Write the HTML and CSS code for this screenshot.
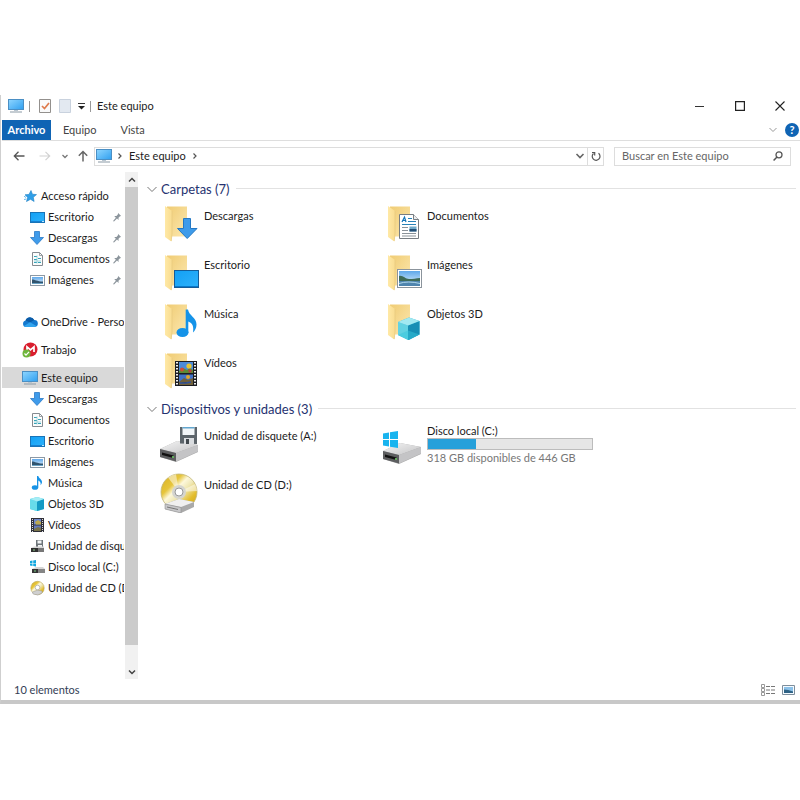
FILE: styles.css
```css
* { box-sizing: border-box; }

body {
  margin: 0;
  padding: 95px 0 0;
  background: #fff;
  color: #1c1c1c;
  font: 11px/14px Lato, "Open Sans", sans-serif;
}

a { color: inherit; text-decoration: none; }
svg { display: block; flex: none; }
button {
  display: flex;
  align-items: center;
  justify-content: center;
  margin: 0;
  padding: 0;
  border: 0;
  background: none;
  color: inherit;
  font: inherit;
}
button svg { width: 10px; height: 10px; }

.defs { position: absolute; width: 0; height: 0; }
.ico { width: 16px; height: 16px; }

.window {
  padding-left: 1px;
  border-left: 1px solid #cfcfcf;
  border-bottom: 4px solid #c8c8c8;
}

/* Title bar */
.titlebar { display: flex; align-items: center; height: 22px; padding-left: 6px; }
.titlebar h1 { margin: 0 0 0 6px; font-size: 11px; font-weight: 400; }
.rule { width: 1px; height: 11px; margin-left: 5px; background: #999; }
.titlebar .quick { margin: 0 4px 0 7px; }
.titlebar .quick ~ .rule { margin-left: 1px; }
.controls { display: flex; margin-left: auto; }
.controls button { width: 40px; height: 22px; }

/* Ribbon tabs */
.tabs { display: flex; align-items: center; height: 24px; padding-top: 3px; border-bottom: 1px solid #dedede; }
.tab { height: 20px; padding: 0 12px; color: #444; }
.tab.active { width: 49px; padding: 0; background: #0f64b4; color: #fff; font-weight: 700; }
.expand { width: 16px; height: 20px; margin-left: auto; }
.help {
  width: 14px;
  height: 14px;
  margin: 0 1px 0 4px;
  border-radius: 50%;
  background: #0f64b4;
  color: #fff;
  font-weight: 700;
}

/* Address row */
.navbar { display: flex; align-items: center; height: 30px; padding: 0 9px 0 11px; }
.arrow, .up { width: 12px; height: 20px; }
.arrow svg, .up svg { width: 12px; height: 12px; }
.arrow + .arrow { margin-left: 14px; }
.recent { width: 10px; height: 20px; margin: 0 7px 0 9px; }
.address {
  display: flex;
  flex: 1;
  align-items: center;
  height: 19px;
  margin: 0 10px 0 5px;
  padding-left: 1px;
  border: 1px solid #ddd;
}
.address .chev { width: 10px; height: 10px; margin: 0 3px; }
.address a { margin: 0 1px; }
.drop { width: 14px; margin-left: auto; }
.reload { width: 16px; height: 17px; border-left: 1px solid #ddd; }
.search {
  display: flex;
  align-items: center;
  width: 177px;
  height: 19px;
  padding: 0 7px;
  border: 1px solid #ddd;
}
.search input {
  flex: 1;
  min-width: 0;
  padding: 0;
  border: 0;
  outline: 0;
  background: none;
  font: inherit;
}
.search input::placeholder { color: #666; opacity: 1; }
.search svg { width: 10px; height: 10px; }

/* Folder tree, scroll bar and content */
.body { display: flex; min-height: 508px; padding-top: 1px; }
.tree { width: 122px; margin-right: 1px; padding-top: 13px; overflow: hidden; }
.group { margin-bottom: 7px; }
.group:first-child { margin-bottom: 21px; }
.tree a { display: flex; align-items: center; height: 21px; padding-left: 20px; white-space: nowrap; }
.tree a.sub { padding-left: 27px; }
.tree .ico { margin-right: 3px; }
.tree .current { background: #d9d9d9; }
.tree .pin { width: 12px; height: 12px; margin: 0 1px 0 auto; }

.scroll { display: flex; flex-direction: column; width: 13px; background: #f1f1f1; }
.scroll button { width: 13px; height: 15px; }
.thumb { flex: 458; background: #cbcbcb; }
.track { flex: 19; }

main { flex: 1; min-width: 0; padding: 8px 4px 0 9px; }
h2 {
  display: flex;
  align-items: center;
  gap: 4px;
  height: 17px;
  margin: 0;
  color: #253270;
  font-size: 13px;
  font-weight: 400;
}
h2 svg { width: 10px; height: 10px; }
h2::after { content: ""; flex: 1; height: 1px; margin-left: 2px; background: #e2e2e2; }
.items {
  display: grid;
  grid-template-columns: repeat(auto-fill, 223px);
  grid-auto-rows: 49px;
  padding: 7px 0 0 13px;
}
.items a { display: flex; align-items: flex-start; gap: 4px; }
.items svg { width: 40px; height: 40px; }
.items a > span { padding-top: 5px; }
.items .disk .info { display: flex; flex-direction: column; padding: 0; line-height: 13px; }
.bar { width: 166px; height: 12px; margin: 1px 0; border: 1px solid #bcbcbc; background: #e6e6e6; }
.fill { display: block; height: 100%; background: #26a0da; }
.free { color: #777; }

/* Status bar */
.status { display: flex; align-items: center; height: 21px; padding: 0 4px 0 12px; color: #333d55; }
.status span { margin-right: auto; }
.status button { margin-left: 4px; }
.status button svg { width: 16px; height: 12px; }
```

FILE: index.html
```html
<!DOCTYPE html>
<html lang="es">
<head>
<meta charset="utf-8">
<title>Este equipo</title>
<link rel="stylesheet" href="styles.css">
</head>
<body>
<svg class="defs" aria-hidden="true">
  <defs>
    <linearGradient id="g-screen" x1="0" y1="0" x2="1" y2="1"><stop offset="0" stop-color="#8fd6ff"/><stop offset="1" stop-color="#2f9ff0"/></linearGradient>
    <linearGradient id="g-desk" x1="0" y1="0" x2="1" y2="1"><stop offset="0" stop-color="#12a0f5"/><stop offset="1" stop-color="#2fb2fb"/></linearGradient>
    <linearGradient id="g-front" x1="0" y1="0" x2="1" y2="0"><stop offset="0" stop-color="#ffe9a6"/><stop offset="1" stop-color="#f9dc90"/></linearGradient>
    <linearGradient id="g-back" x1="0" y1="0" x2="1" y2="1"><stop offset="0" stop-color="#f0cc74"/><stop offset="1" stop-color="#fce8b0"/></linearGradient>
    <linearGradient id="g-drive" x1="0" y1="0" x2="1" y2="1"><stop offset="0" stop-color="#f4f4f4"/><stop offset="1" stop-color="#c4c4c6"/></linearGradient>
    <linearGradient id="g-disc" x1="0" y1="0" x2="1" y2="1"><stop offset="0" stop-color="#d9b021"/><stop offset=".3" stop-color="#e6c53c"/><stop offset=".42" stop-color="#fdf8dc"/><stop offset=".55" stop-color="#efe7b4"/><stop offset=".75" stop-color="#e3bd2c"/><stop offset="1" stop-color="#c79d1a"/></linearGradient>
    <linearGradient id="g-sky" x1="0" y1="0" x2="0" y2="1"><stop offset="0" stop-color="#5fa8ea"/><stop offset="1" stop-color="#e6f4ff"/></linearGradient>
  </defs>
  <symbol id="pc" viewBox="0 0 16 16"><rect x=".5" y="1.5" width="15" height="10" fill="url(#g-screen)" stroke="#4b8fc4"/><path d="M6 12h4v1H6z" fill="#b9c6d0"/><path d="M2 14h12" stroke="#8a99a5"/></symbol>
  <symbol id="desktop" viewBox="0 0 16 16"><rect x="1.5" y="3.5" width="14" height="10" fill="url(#g-desk)" stroke="#1874b8"/><path d="M2 12.5h11" stroke="#1680d0"/><path d="M13 12.5h2" stroke="#b8e6ff"/></symbol>
  <symbol id="down" viewBox="0 0 16 16"><path d="M5.500 1.500h5v6h4L8 14.500 1.500 7.500h4z" fill="#3f9bea" stroke="#2b7ac6" stroke-width=".8"/></symbol>
  <symbol id="doc" viewBox="0 0 16 16"><path d="M3.500 1.500h7l3 3v10h-10z" fill="#fcfcfc" stroke="#858b90"/><path d="M10.500 1.500v3h3" fill="none" stroke="#858b90" stroke-width=".8"/><path d="M5 5.500h3M5 8.500h3M9 7.500h3M5 11.500h3M9 11.500h3" stroke="#36a4b8"/><path d="M8 4.500v8M5 10h7" stroke="#8ecbd6" stroke-width=".8"/></symbol>
  <symbol id="image" viewBox="0 0 16 16"><rect x="1.500" y="3.500" width="14" height="10" fill="#fff" stroke="#8c99a5"/><path d="M3 5h11v7H3z" fill="url(#g-sky)"/><path d="M3 7.500c3 0 5 2 11 2V12H3z" fill="#31546e"/><path d="M3 11h11v1H3z" fill="#69a2c4"/></symbol>
  <symbol id="music" viewBox="0 0 16 16"><ellipse cx="6" cy="12.500" rx="3.200" ry="2.300" fill="#1793e6"/><path d="M8 1h1.300c.4 2.300 3.700 3.300 3.700 6 0 1.400-.7 2.400-1.500 3.200.7-2.500-.5-3.900-2.200-4.600v7H8z" fill="#1793e6"/></symbol>
  <symbol id="cube" viewBox="0 0 16 16"><path d="M8 1l7 2v10l-7 2-7-2V3z" fill="#4bc9e3"/><path d="M1 3l7 2.500V15l-7-2z" fill="#68dcea"/><path d="M8 5.500L15 3v10l-7 2z" fill="#159bc4"/><path d="M1 3l7-2 7 2-7 2.500z" fill="#a5edf5"/></symbol>
  <symbol id="film" viewBox="0 0 16 16"><path d="M2 1h13v14H2z" fill="#303038"/><path d="M5 2h7v5.500H5z" fill="#6e86c8"/><path d="M5 8.500h7V14H5z" fill="#6478b8"/><path d="M6 5l3-2 3 2v2.500H7z" fill="#bca84e"/><path d="M5 12l4-2 3 1v3H5z" fill="#77724a"/><path d="M3.500 2v13M13.500 2v13" stroke="#ddd" stroke-dasharray="1 1"/></symbol>
  <symbol id="star" viewBox="0 0 16 16"><path d="M9 2.500l1.400 3.700 4.100.4-3.200 2.700.8 4.200-3.600-2.200L4.500 13.500l1.200-4.100L3 6.800l4-.4z" fill="#2f9fe8" stroke="#1d7fc4" stroke-width=".6"/><path d="M2 8.200l2 1.300M2 11.500l2.300-.5" stroke="#68b9ec"/></symbol>
  <symbol id="pin" viewBox="0 0 16 16"><path d="M9.500 2.500l4 4-1.500.6-2 2 .1 3L8 10 4 14l-1-.2L3 13l3.500-4L4.300 6.800l3-.1 1.800-2z" fill="#8c959c"/></symbol>
  <symbol id="cloud" viewBox="0 0 16 16"><path d="M4 13a3.300 3.300 0 0 1-.4-6.500A4.700 4.700 0 0 1 12.200 6 3.500 3.500 0 0 1 12.500 13z" fill="#1479cf"/><path d="M3.500 6.500A4.700 4.700 0 0 1 12.200 6L8 8.500z" fill="#0b5ca8"/><path d="M2 12l6-3.700 6.500 3.700q-.8 1-2 1H4q-1.300 0-2-1z" fill="#31a4ee"/></symbol>
  <symbol id="mega" viewBox="0 0 16 16"><circle cx="8.500" cy="7.500" r="7" fill="#d91e2e"/><path d="M5 10V4.800l3.500 3 3.500-3V10" fill="none" stroke="#fff" stroke-width="1.700"/><circle cx="4.500" cy="11.500" r="4" fill="#6fb63c"/><path d="M2.500 11.500l1.500 1.700 3-3.400" fill="none" stroke="#fff" stroke-width="1.200"/></symbol>
  <symbol id="floppy-s" viewBox="0 0 16 16"><path d="M7 2h7v7H7z" fill="#6d7478"/><path d="M8.500 2.500h4v3h-4zM9 7h4v2H9z" fill="#f3f5f6"/><path d="M2 10l3-1.500h10V10z" fill="#d6d6d6"/><path d="M2 10h13v4H2z" fill="#777"/><path d="M2 10h7v4H2z" fill="#303030"/><path d="M4 12h2" stroke="#8fd08a"/></symbol>
  <symbol id="disk-s" viewBox="0 0 16 16"><path d="M1 2l2.500-.4v2.300H1zM4.200 1.500L7 1v2.900H4.200zM1 4.600h2.500v2.300L1 6.500zM4.200 4.600H7v2.900L4.200 7z" fill="#12a7df"/><path d="M3 10l4-2h7l2 2z" fill="#d6d6d6"/><path d="M3 10h13v4H3z" fill="#858585"/><path d="M3 10h6v4H3z" fill="#353535"/><path d="M5 12h2" stroke="#7fd089"/></symbol>
  <symbol id="cd-s" viewBox="0 0 16 16"><circle cx="8.500" cy="8" r="6.700" fill="url(#g-disc)" stroke="#b8a65a" stroke-width=".6"/><circle cx="8.500" cy="7.500" r="2.300" fill="#fff" stroke="#bbb"/><path d="M3.500 12l5-1.800 4.500.8v2l-4 2-5-1z" fill="#cfcfcf" stroke="#999" stroke-width=".5"/></symbol>
  <symbol id="folder" viewBox="0 0 40 40"><path d="M7 2.500h20v30H7z" fill="url(#g-back)"/><path d="M5 2l7 5v23l-.7 7.500L5 33z" fill="url(#g-front)"/><path d="M12 7v23l-.8 7" fill="none" stroke="#e9cb80" stroke-width=".8"/></symbol>
  <symbol id="f-down" viewBox="0 0 40 40"><use href="#folder"/><path d="M23.500 14.500h7v10h6.500L27.200 34.500 17.500 24.500h6z" fill="#3e9bea" stroke="#2478c4"/></symbol>
  <symbol id="f-desk" viewBox="0 0 40 40"><use href="#folder"/><rect x="14.500" y="17.500" width="24" height="17" fill="url(#g-desk)" stroke="#155c98"/><path d="M15 33.500h23" stroke="#0878c9"/></symbol>
  <symbol id="f-music" viewBox="0 0 40 40"><use href="#folder"/><ellipse cx="22.500" cy="30.500" rx="6" ry="4.500" fill="#1593e8"/><path d="M25.700 7.500H28c.8 6 8.500 8 8.500 15 0 3.500-1.500 6-3.500 8 1-6-.5-9.500-4.700-11V31h-2.600z" fill="#1593e8"/></symbol>
  <symbol id="f-film" viewBox="0 0 40 40"><use href="#folder"/><path d="M15 10h22v25H15z" fill="#1c1d22"/><path d="M19 11h14v11H19z" fill="#4d8bd8"/><path d="M19 23.500h14V34H19z" fill="#4173c8"/><path d="M19 20l4-3 4 2 3-2 3 2v3H19z" fill="#5d8b35"/><circle cx="29" cy="15" r="2.600" fill="#e8c530"/><circle cx="22" cy="18.500" r="2" fill="#d14b36"/><circle cx="30" cy="20" r="1.700" fill="#b8413e"/><path d="M19 31l5-4 4 2 5-2v7H19z" fill="#71613c"/><circle cx="28" cy="26" r="2" fill="#e2a62a"/><path d="M20 32h6l5-1" stroke="#31539a" stroke-width="1.500"/><path d="M17 11v24M35 11v24" stroke="#f1f1f1" stroke-width="2" stroke-dasharray="1.500 1.500"/></symbol>
  <symbol id="f-doc" viewBox="0 0 40 40"><use href="#folder"/><path d="M16.500 10.500h14l5 5v19h-19z" fill="#fff" stroke="#777d82"/><path d="M30.500 10.500v5h5" fill="#eee" stroke="#777d82"/><path d="M19 18l2.500-5 1.500 5M20 16.500h3" fill="none" stroke="#1475b8" stroke-width="1.200"/><path d="M25 14.500h4M25 17.500h8M19 20.500h14" stroke="#2883b8"/><path d="M19 23.500h6M19 26.500h6M19 29.500h14M19 32h14" stroke="#8b9399"/><path d="M26.500 22.500h7v5h-7z" fill="#6fa9c9"/><path d="M26.500 25h7v2.500h-7z" fill="#234e75"/></symbol>
  <symbol id="f-image" viewBox="0 0 40 40"><use href="#folder"/><rect x="14.500" y="16.500" width="24" height="18" fill="#fff" stroke="#8b949c"/><path d="M16 18h21v15H16z" fill="url(#g-sky)"/><path d="M16 23c4-1 6 3 10 3s7-.5 11-1v3.500H16z" fill="#3f6b58"/><path d="M16 28h21v5H16z" fill="#4f85ae"/><path d="M16 30.500q9-3 21 0" fill="none" stroke="#b0d7ec"/></symbol>
  <symbol id="f-cube" viewBox="0 0 40 40"><use href="#folder"/><path d="M15 20l11-4.500L36.500 19v13.500L26 38l-11-5z" fill="#36b8d6"/><path d="M15 20l10 3.500V38l-10-5z" fill="#62d2e2"/><path d="M25 23.500L36.500 19v13.500L25 38z" fill="#188fb5"/><path d="M15 20l11-4.500L36.500 19 25 23.500z" fill="#a2e9f1"/><path d="M15 33l10-4.500 11.500 4L25 38z" fill="#36c6dc" opacity=".5"/></symbol>
  <symbol id="d-base" viewBox="0 0 40 40"><path d="M0 25l17-8 21 4v7L16 38 0 33z" fill="#aaa"/><path d="M0 25l17-8 21 4-22 8z" fill="url(#g-drive)"/><path d="M16 29l22-8v6.500L16 37.500z" fill="#c4c4c6"/><path d="M0 25l16 4v8.500L0 33z" fill="#5d5e60"/><path d="M2 28.500l11.500 3V34L2 31z" fill="#111"/><path d="M12 33h2" stroke="#75d96d" stroke-width="1.500"/></symbol>
  <symbol id="d-floppy" viewBox="0 0 40 40"><use href="#d-base"/><path d="M20 3h17v17l-17-.5z" fill="#5d656b"/><path d="M22.500 3h12v8h-12z" fill="#f2f6f8"/><path d="M22.500 3h12v1.500h-12z" fill="#62a6cf"/><path d="M24 14h10v6H24z" fill="#dadde0"/><path d="M26 15h3v5h-3z" fill="#42494e"/></symbol>
  <symbol id="d-win" viewBox="0 0 40 40"><g transform="translate(0 2)"><use href="#d-base"/></g><path d="M0 9.500l6-1V15H0zM7 8.300L15 7v8H7zM0 16h6v6.500l-6-1zM7 16h8v8l-8-1.300z" fill="#18b4ef"/></symbol>
  <symbol id="d-cd" viewBox="0 0 40 40"><circle cx="19" cy="19" r="18" fill="url(#g-disc)" stroke="#c2b677" stroke-width=".8"/><path d="M19 19L8 4.500a18 18 0 0 1 8-3.200zM19 19l16-8a18 18 0 0 1 2 7z" fill="#fff" opacity=".5"/><circle cx="19" cy="19" r="7" fill="#d5d5d0"/><circle cx="19" cy="19" r="4" fill="#fff" stroke="#999"/><path d="M5 31l14-5 15 3v5l-13 6-16-4z" fill="#aaa"/><path d="M5 31l14-5 15 3-13 5z" fill="#f0f0f0"/><path d="M5 31l16 3.500V40L5 36z" fill="#c7c7c9" stroke="#909090" stroke-width=".6"/><path d="M7 34l11 2.500" stroke="#777"/></symbol>
</svg>

<div class="window">
  <header class="titlebar">
    <svg class="ico"><use href="#pc"/></svg>
    <span class="rule"></span>
    <svg class="ico quick" viewBox="0 0 16 16"><path d="M2.500 1.500h11v13h-11z" fill="#fafafa" stroke="#93908d"/><path d="M5 8l2.500 2.500L12 5" fill="none" stroke="#df7b4c" stroke-width="1.700"/></svg>
    <svg class="ico" viewBox="0 0 16 16"><path d="M2.500 1.500h11v13h-11z" fill="#e3e9f1" stroke="#c9d2de"/></svg>
    <svg class="ico" viewBox="0 0 16 16"><path d="M5 5.500h7" stroke="#333"/><path d="M5 8h7l-3.500 3.500z" fill="#222"/></svg>
    <span class="rule"></span>
    <h1>Este equipo</h1>
    <div class="controls">
      <button aria-label="Minimizar"><svg viewBox="0 0 10 10"><path d="M0 5.500h9" stroke="#333"/></svg></button>
      <button aria-label="Maximizar"><svg viewBox="0 0 10 10"><path d="M.6.600h8.800v8.800H.6z" fill="none" stroke="#222" stroke-width="1.200"/></svg></button>
      <button aria-label="Cerrar"><svg viewBox="0 0 10 10"><path d="M.5.500l9 9M9.500.500l-9 9" stroke="#222" stroke-width="1.100"/></svg></button>
    </div>
  </header>

  <nav class="tabs">
    <button class="tab active">Archivo</button>
    <button class="tab">Equipo</button>
    <button class="tab">Vista</button>
    <button class="expand" aria-label="Expandir"><svg viewBox="0 0 10 10"><path d="M1.500 3L5 6.500 8.500 3" fill="none" stroke="#999"/></svg></button>
    <button class="help" aria-label="Ayuda">?</button>
  </nav>

  <div class="navbar">
    <button class="arrow" aria-label="Atrás"><svg viewBox="0 0 12 12"><path d="M11.500 6H1.500M5.500 1.800L1.300 6l4.200 4.200" fill="none" stroke="#555" stroke-width="1.300"/></svg></button>
    <button class="arrow" aria-label="Adelante"><svg viewBox="0 0 12 12"><path d="M.5 6h10M6.500 1.800L10.700 6l-4.200 4.200" fill="none" stroke="#d2d2d2" stroke-width="1.200"/></svg></button>
    <button class="recent" aria-label="Recientes"><svg viewBox="0 0 10 10"><path d="M2.500 4L5 6.500 7.500 4" fill="none" stroke="#777" stroke-width="1.300"/></svg></button>
    <button class="up" aria-label="Arriba"><svg viewBox="0 0 12 12"><path d="M6 11.500V1.500M1.800 5.700L6 1.500l4.200 4.200" fill="none" stroke="#666" stroke-width="1.500"/></svg></button>
    <div class="address">
      <svg class="ico"><use href="#pc"/></svg>
      <svg class="chev" viewBox="0 0 10 10"><path d="M3.500 2.500L6 5 3.500 7.500" fill="none" stroke="#555" stroke-width="1.200"/></svg>
      <a href="#">Este equipo</a>
      <svg class="chev" viewBox="0 0 10 10"><path d="M3.500 2.500L6 5 3.500 7.500" fill="none" stroke="#555" stroke-width="1.200"/></svg>
      <button class="drop" aria-label="Historial"><svg viewBox="0 0 10 10"><path d="M1.500 3L5 6.500 8.500 3" fill="none" stroke="#666" stroke-width="1.600"/></svg></button>
      <button class="reload" aria-label="Actualizar"><svg viewBox="0 0 10 10"><path d="M7.500 2.300a3.900 3.900 0 1 1-5 .2M1 1.500h2.700v3" fill="none" stroke="#555" stroke-width="1.200"/></svg></button>
    </div>
    <label class="search">
      <input type="text" placeholder="Buscar en Este equipo" aria-label="Buscar en Este equipo">
      <svg viewBox="0 0 10 10"><circle cx="6" cy="3.800" r="3" fill="none" stroke="#555" stroke-width="1.300"/><path d="M4 6L.6 9.500" stroke="#555" stroke-width="1.500"/></svg>
    </label>
  </div>

  <div class="body">
    <nav class="tree">
      <div class="group">
        <a href="#"><svg class="ico"><use href="#star"/></svg><span>Acceso rápido</span></a>
        <a class="sub" href="#"><svg class="ico"><use href="#desktop"/></svg><span>Escritorio</span><svg class="pin"><use href="#pin"/></svg></a>
        <a class="sub" href="#"><svg class="ico"><use href="#down"/></svg><span>Descargas</span><svg class="pin"><use href="#pin"/></svg></a>
        <a class="sub" href="#"><svg class="ico"><use href="#doc"/></svg><span>Documentos</span><svg class="pin"><use href="#pin"/></svg></a>
        <a class="sub" href="#"><svg class="ico"><use href="#image"/></svg><span>Imágenes</span><svg class="pin"><use href="#pin"/></svg></a>
      </div>
      <div class="group"><a href="#"><svg class="ico"><use href="#cloud"/></svg><span>OneDrive - Personal</span></a></div>
      <div class="group"><a href="#"><svg class="ico"><use href="#mega"/></svg><span>Trabajo</span></a></div>
      <div class="group">
        <a class="current" href="#"><svg class="ico"><use href="#pc"/></svg><span>Este equipo</span></a>
        <a class="sub" href="#"><svg class="ico"><use href="#down"/></svg><span>Descargas</span></a>
        <a class="sub" href="#"><svg class="ico"><use href="#doc"/></svg><span>Documentos</span></a>
        <a class="sub" href="#"><svg class="ico"><use href="#desktop"/></svg><span>Escritorio</span></a>
        <a class="sub" href="#"><svg class="ico"><use href="#image"/></svg><span>Imágenes</span></a>
        <a class="sub" href="#"><svg class="ico"><use href="#music"/></svg><span>Música</span></a>
        <a class="sub" href="#"><svg class="ico"><use href="#cube"/></svg><span>Objetos 3D</span></a>
        <a class="sub" href="#"><svg class="ico"><use href="#film"/></svg><span>Vídeos</span></a>
        <a class="sub" href="#"><svg class="ico"><use href="#floppy-s"/></svg><span>Unidad de disquete (A:)</span></a>
        <a class="sub" href="#"><svg class="ico"><use href="#disk-s"/></svg><span>Disco local (C:)</span></a>
        <a class="sub" href="#"><svg class="ico"><use href="#cd-s"/></svg><span>Unidad de CD (D:)</span></a>
      </div>
    </nav>
    <div class="scroll">
      <button aria-label="Subir"><svg viewBox="0 0 10 10"><path d="M2 6.500L5 3.500 8 6.500" fill="none" stroke="#444" stroke-width="1.500"/></svg></button>
      <div class="thumb"></div>
      <div class="track"></div>
      <button aria-label="Bajar"><svg viewBox="0 0 10 10"><path d="M2 3.500L5 6.500 8 3.500" fill="none" stroke="#444" stroke-width="1.500"/></svg></button>
    </div>
    <main>
      <section>
        <h2><svg viewBox="0 0 10 10"><path d="M.5 3L5 7.500 9.500 3" fill="none" stroke="#777"/></svg>Carpetas (7)</h2>
        <div class="items">
          <a href="#"><svg><use href="#f-down"/></svg><span>Descargas</span></a>
          <a href="#"><svg><use href="#f-doc"/></svg><span>Documentos</span></a>
          <a href="#"><svg><use href="#f-desk"/></svg><span>Escritorio</span></a>
          <a href="#"><svg><use href="#f-image"/></svg><span>Imágenes</span></a>
          <a href="#"><svg><use href="#f-music"/></svg><span>Música</span></a>
          <a href="#"><svg><use href="#f-cube"/></svg><span>Objetos 3D</span></a>
          <a href="#"><svg><use href="#f-film"/></svg><span>Vídeos</span></a>
        </div>
      </section>
      <section>
        <h2><svg viewBox="0 0 10 10"><path d="M.5 3L5 7.500 9.500 3" fill="none" stroke="#777"/></svg>Dispositivos y unidades (3)</h2>
        <div class="items">
          <a href="#"><svg><use href="#d-floppy"/></svg><span>Unidad de disquete (A:)</span></a>
          <a class="disk" href="#"><svg><use href="#d-win"/></svg>
            <span class="info"><span>Disco local (C:)</span><span class="bar"><span class="fill" style="width:29%"></span></span><span class="free">318 GB disponibles de 446 GB</span></span></a>
          <a href="#"><svg><use href="#d-cd"/></svg><span>Unidad de CD (D:)</span></a>
        </div>
      </section>
    </main>
  </div>

  <footer class="status">
    <span>10 elementos</span>
    <button aria-label="Detalles"><svg viewBox="0 0 16 12"><path d="M1.500.500h3v3h-3zM1.500 4.500h3v3h-3zM1.500 8.500h3v3h-3z" fill="none" stroke="#999"/><path d="M6 2.500h4M11 2.500h4M6 6h4M11 6h4M6 9.500h4M11 9.500h4" stroke="#777"/></svg></button>
    <button aria-label="Iconos"><svg viewBox="0 0 16 12"><path d="M2.500 1.500h12v9h-12z" fill="#f4faff" stroke="#7e8e9c"/><path d="M4 3h9v6H4z" fill="#8cc2ea"/><path d="M4 5.500q4 0 9 2V9H4z" fill="#2e6285"/></svg></button>
  </footer>
</div>
</body>
</html>
```
